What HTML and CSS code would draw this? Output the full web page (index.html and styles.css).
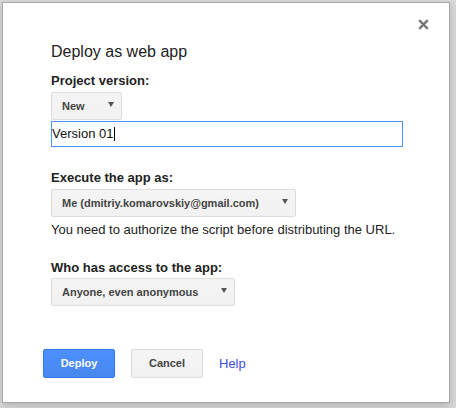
FILE: index.html
```html
<!DOCTYPE html>
<html>
<head>
<meta charset="utf-8">
<link rel="stylesheet" href="styles.css">
</head>
<body>
<div class="dialog">
  <svg class="close" width="11" height="11" viewBox="0 0 11 11"><path d="M1.2 1.2L9.8 9.8M9.8 1.2L1.2 9.8" stroke="#777" stroke-width="2.4" stroke-linecap="butt"/></svg>
  <div class="title">Deploy as web app</div>
  <div class="label l1">Project version:</div>
  <div class="select s1"><span>New</span><i class="arrow"></i></div>
  <div class="input">Version 01<span class="caret"></span></div>
  <div class="label l2">Execute the app as:</div>
  <div class="select s2"><span>Me (dmitriy.komarovskiy@gmail.com)</span><i class="arrow"></i></div>
  <div class="note">You need to authorize the script before distributing the URL.</div>
  <div class="label l3">Who has access to the app:</div>
  <div class="select s3"><span>Anyone, even anonymous</span><i class="arrow"></i></div>
  <div class="buttons">
    <div class="btn primary">Deploy</div>
    <div class="btn">Cancel</div>
    <a class="help">Help</a>
  </div>
</div>
</body>
</html>
```
FILE: styles.css
```css
html, body { margin: 0; padding: 0; }
body {
  background: #d9d9d9;
  font-family: "Liberation Sans", Arial, sans-serif;
  color: #222;
  width: 456px;
  height: 408px;
  overflow: hidden;
}
.dialog {
  position: relative;
  box-sizing: border-box;
  margin: 2px;
  width: 448px;
  height: 401px;
  background: #fff;
  border: 1px solid #a8a8a8;
  box-shadow: 0 3px 8px rgba(0,0,0,0.18);
  padding: 39px 0 0 48px;
  display: flex;
  flex-direction: column;
  align-items: flex-start;
}
.close { position: absolute; left: 415px; top: 16px; }
.title { font-size: 16px; line-height: 20px; color: #222; }
.label { font-size: 13px; font-weight: bold; line-height: 16px; color: #222; }
.l1 { margin-top: 11px; }
.l2 { margin-top: 23px; }
.l3 { margin-top: 22px; }
.select {
  box-sizing: border-box;
  height: 28px;
  display: inline-flex;
  align-items: center;
  padding: 0 7px 0 10px;
  background: linear-gradient(#f5f5f5, #f1f1f1);
  border: 1px solid #dcdcdc;
  border-radius: 2px;
  font-size: 11px;
  font-weight: bold;
  color: #444;
}
.select span { margin-right: 23px; }
.arrow {
  width: 0; height: 0;
  border-left: 3px solid transparent;
  border-right: 3px solid transparent;
  border-top: 5px solid #555;
  margin-bottom: 3px;
}
.s1 { margin-top: 3px; }
.s2 { margin-top: 3px; }
.s3 { margin-top: 2px; }
.input {
  box-sizing: border-box;
  margin-top: 1px;
  width: 352px;
  height: 26px;
  border: 1px solid #4d90fe;
  padding: 0 0 0 0;
  font-size: 13px;
  line-height: 24px;
  color: #111;
  display: flex;
  align-items: center;
}
.caret { display: inline-block; width: 1px; height: 14px; background: #000; margin-left: 1px; }
.note { margin-top: 5px; font-size: 13px; line-height: 16px; color: #222; }
.buttons {
  margin-top: 43px;
  margin-left: -8px;
  display: flex;
  align-items: center;
}
.btn {
  box-sizing: border-box;
  min-width: 72px;
  height: 29px;
  line-height: 27px;
  padding: 0 8px;
  text-align: center;
  font-size: 11px;
  font-weight: bold;
  color: #444;
  background: linear-gradient(#f5f5f5, #f1f1f1);
  border: 1px solid #dcdcdc;
  border-radius: 2px;
  margin-right: 16px;
}
.btn.primary {
  color: #fff;
  background: linear-gradient(#4d90fe, #4787ed);
  border-color: #3079ed;
}
.help { font-size: 13px; color: #3b4fdd; margin-top: -1px; }
```
